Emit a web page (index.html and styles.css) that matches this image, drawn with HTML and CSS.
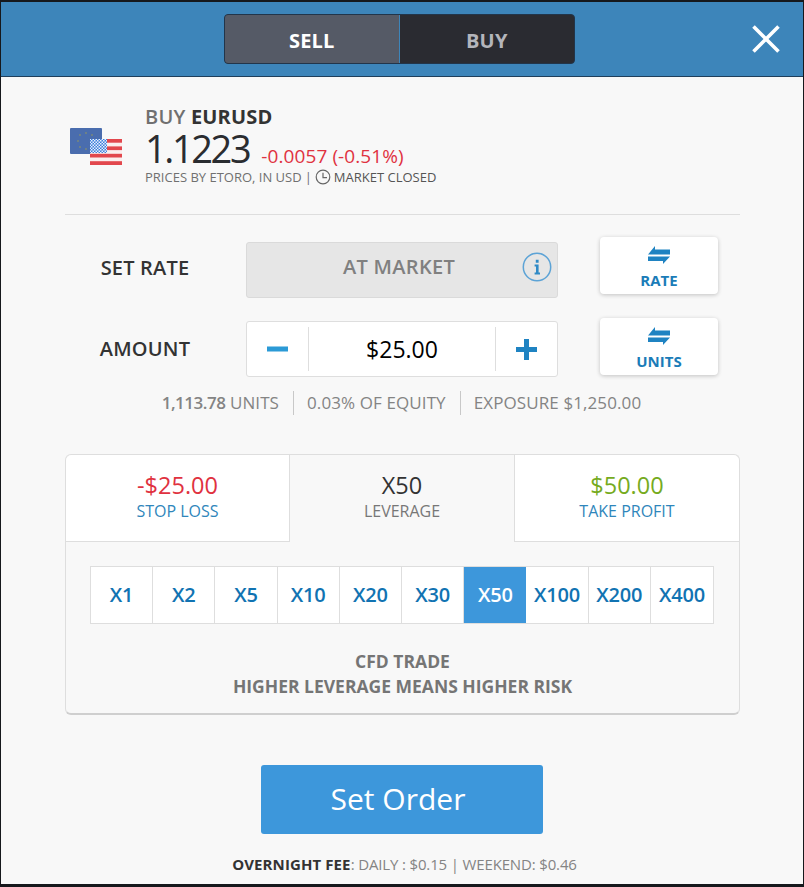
FILE: index.html
```html
<!DOCTYPE html>
<html lang="en">
<head>
    <meta charset="UTF-8">
    <meta name="viewport" content="width=device-width, initial-scale=1.0">
    <title>Set Order</title>
    <link rel="stylesheet" href="styles.css">
</head>
<body>
    <div class="modal">
        <header class="modal-head">
            <div class="side-toggle">
                <div class="side side-active">SELL</div>
                <div class="side">BUY</div>
            </div>
            <button class="close-btn" aria-label="Close">
                <svg width="28" height="28" viewBox="0 0 28 28"><path d="M1.5 1.5 L26.5 26.5 M26.5 1.5 L1.5 26.5" stroke="#fff" stroke-width="3.6" fill="none"/></svg>
            </button>
        </header>

        <section class="instrument">
            <svg class="flags" width="52" height="37" viewBox="0 0 52 37">
                <defs>
                    <pattern id="canton" width="3" height="3" patternUnits="userSpaceOnUse">
                        <rect width="3" height="3" fill="#3f7fdc"/>
                        <rect width="1.5" height="1.5" fill="#e8f0fc"/>
                        <rect x="1.5" y="1.5" width="1.5" height="1.5" fill="#e8f0fc"/>
                    </pattern>
                </defs>
                <rect x="0" y="0" width="32" height="26" rx="1" fill="#4a6dae"/>
                <g fill="#76867f">
                    <circle cx="16" cy="5" r="1.1"/><circle cx="22" cy="7" r="1.1"/><circle cx="10" cy="7" r="1.1"/>
                    <circle cx="8" cy="13" r="1.1"/><circle cx="10" cy="19" r="1.1"/><circle cx="16" cy="21" r="1.1"/>
                </g>
                <rect x="20" y="11" width="32" height="26" rx="1" fill="#fbeeee"/>
                <g fill="#e2474d">
                    <rect x="20" y="11" width="32" height="3.7"/>
                    <rect x="20" y="18.4" width="32" height="3.7"/>
                    <rect x="20" y="25.8" width="32" height="3.7"/>
                    <rect x="20" y="33.2" width="32" height="3.8"/>
                </g>
                <rect x="20" y="11" width="17" height="14" fill="url(#canton)"/>
            </svg>
            <div class="instrument-info">
                <div class="instrument-name"><span class="action">BUY</span> EURUSD</div>
                <div class="instrument-rate">
                    <span class="price">1.1223</span>
                    <span class="change">-0.0057 (-0.51%)</span>
                </div>
                <div class="instrument-note">
                    PRICES BY ETORO, IN USD
                    <span class="pipe">|</span>
                    <svg class="clock" width="16" height="16" viewBox="0 0 16 16"><circle cx="8" cy="8" r="6.8" fill="none" stroke="#666" stroke-width="1.2"/><path d="M8 3.8 V8.6 H12" fill="none" stroke="#666" stroke-width="1.2"/></svg>
                    <span class="closed">MARKET CLOSED</span>
                </div>
            </div>
        </section>

        <section class="inputs">
            <div class="input-row">
                <div class="input-label">SET RATE</div>
                <div class="rate-box">
                    <span>AT MARKET</span>
                    <svg class="info-icon" width="30" height="30" viewBox="0 0 30 30"><circle cx="15" cy="15" r="13.7" fill="none" stroke="#5ca3d6" stroke-width="1.5"/><path d="M12.6 12.6 H16.6 V20.6 H18 V22.4 H12.6 V20.6 H14 V14.4 H12.6 Z M13.8 7.8 H16.6 V10.8 H13.8 Z" fill="#2f8ac6"/></svg>
                </div>
                <button class="swap-btn">
                    <svg width="22" height="18" viewBox="0 0 22 18"><path d="M0 8.5 L7 0 V3.5 H22 V8.5 Z M0 10.5 H22 L15 18 V15 H0 Z" fill="#1f83c2"/></svg>
                    <span>RATE</span>
                </button>
            </div>
            <div class="input-row input-row-amount">
                <div class="input-label">AMOUNT</div>
                <div class="amount-box">
                    <div class="step"><svg width="21" height="6" viewBox="0 0 21 6"><rect width="21" height="5" y="0.5" fill="#2b9ad6"/></svg></div>
                    <div class="amount">$25.00</div>
                    <div class="step"><svg width="21" height="21" viewBox="0 0 21 21"><path d="M8 0 H13 V8 H21 V13 H13 V21 H8 V13 H0 V8 H8 Z" fill="#1f83c2"/></svg></div>
                </div>
                <button class="swap-btn">
                    <svg width="22" height="18" viewBox="0 0 22 18"><path d="M0 8.5 L7 0 V3.5 H22 V8.5 Z M0 10.5 H22 L15 18 V15 H0 Z" fill="#1f83c2"/></svg>
                    <span>UNITS</span>
                </button>
            </div>
            <div class="stats">
                <span class="stat"><b>1,113.78</b> UNITS</span>
                <span class="stat">0.03% OF EQUITY</span>
                <span class="stat">EXPOSURE $1,250.00</span>
            </div>
        </section>

        <section class="panel">
            <div class="tabs">
                <div class="tab">
                    <div class="tab-value red">-$25.00</div>
                    <div class="tab-label">STOP LOSS</div>
                </div>
                <div class="tab tab-active">
                    <div class="tab-value">X50</div>
                    <div class="tab-label">LEVERAGE</div>
                </div>
                <div class="tab">
                    <div class="tab-value green">$50.00</div>
                    <div class="tab-label">TAKE PROFIT</div>
                </div>
            </div>
            <div class="leverage">
                <div class="lev">X1</div>
                <div class="lev">X2</div>
                <div class="lev">X5</div>
                <div class="lev">X10</div>
                <div class="lev">X20</div>
                <div class="lev">X30</div>
                <div class="lev lev-active">X50</div>
                <div class="lev">X100</div>
                <div class="lev">X200</div>
                <div class="lev">X400</div>
            </div>
            <div class="risk">CFD TRADE<br>HIGHER LEVERAGE MEANS HIGHER RISK</div>
        </section>

        <button class="order-btn">Set Order</button>
        <div class="fee"><b>OVERNIGHT FEE</b>: DAILY : $0.15 | WEEKEND: $0.46</div>
    </div>
</body>
</html>
```

FILE: styles.css
```css
* {
    box-sizing: border-box;
}

html, body {
    height: 100%;
}

body {
    margin: 0;
    padding: 2px 1px 3px;
    background-color: #16181c;
    font-family: 'Open Sans', sans-serif;
    overflow: hidden;
}

button {
    font-family: inherit;
    cursor: pointer;
}

.modal {
    height: 882px;
    background-color: #f8f8f8;
}

/* header */
.modal-head {
    height: 75px;
    padding: 12px 0 0 223px;
    background-color: #3d85ba;
    border-bottom: 1px solid #1f3f5c;
    display: flex;
    align-items: flex-start;
}

.side-toggle {
    width: 351px;
    height: 50px;
    display: flex;
    border: 1px solid #22354a;
    border-radius: 4px;
    overflow: hidden;
    background-color: #2a2b31;
}

.side {
    width: 50%;
    padding-top: 3px;
    display: flex;
    align-items: center;
    justify-content: center;
    font-size: 20px;
    font-weight: 700;
    letter-spacing: 0.2px;
    color: #b4b5bb;
}

.side-active {
    background-color: #555a66;
    color: #fff;
    border-right: 1px solid #3d85ba;
}

.close-btn {
    margin: 11px 0 0 177px;
    padding: 0;
    width: 28px;
    height: 28px;
    background: none;
    border: none;
}

/* instrument */
.instrument {
    margin: 0 63px 0 64px;
    height: 138px;
    padding: 28px 0 0 5px;
    border-bottom: 1px solid #dedede;
    display: flex;
}

.flags {
    margin: 23px 23px 0 0;
    flex-shrink: 0;
}

.instrument-name {
    font-size: 20px;
    line-height: 24px;
    font-weight: 700;
    letter-spacing: 0.2px;
    color: #333;
}

.action {
    font-weight: 600;
    color: #707070;
}

.instrument-rate {
    margin-top: -1px;
    display: flex;
    align-items: baseline;
    gap: 12px;
    height: 40px;
}

.price {
    font-size: 38px;
    line-height: 40px;
    color: #2a2c30;
    letter-spacing: -2.4px;
}

.change {
    font-size: 19px;
    letter-spacing: 0.1px;
    color: #e0323f;
}

.instrument-note {
    font-size: 13px;
    line-height: 18px;
    color: #707070;
    display: flex;
    align-items: center;
    gap: 3px;
}

.closed {
    color: #555;
}

/* rate + amount */
.inputs {
    padding-top: 22px;
}

.input-row {
    height: 60px;
    display: flex;
    align-items: flex-start;
}

.input-row-amount {
    margin-top: 21px;
}

.input-label {
    width: 245px;
    padding: 6px 11px 0 54px;
    text-align: center;
    font-size: 20px;
    line-height: 50px;
    font-weight: 600;
    letter-spacing: 0.2px;
    color: #333;
}

.rate-box {
    margin-top: 5px;
    width: 312px;
    height: 56px;
    background-color: #e6e6e6;
    border: 1px solid #dadada;
    border-radius: 3px;
    display: flex;
    align-items: center;
    justify-content: space-between;
    padding: 0 5px 6px 96px;
    font-size: 20px;
    font-weight: 600;
    letter-spacing: 0.3px;
    color: #808080;
}

.rate-box span {
    margin-bottom: 2px;
}

.amount-box {
    margin-top: 3px;
    width: 312px;
    height: 56px;
    background-color: #fff;
    border: 1px solid #dedede;
    border-radius: 3px;
    display: flex;
    align-items: center;
}

.step {
    width: 62px;
    height: 44px;
    display: flex;
    align-items: center;
    justify-content: center;
}

.step:first-child {
    border-right: 1px solid #dedede;
}

.step:last-child {
    border-left: 1px solid #dedede;
}

.amount {
    flex: 1;
    text-align: center;
    font-size: 23px;
    color: #000;
}

.swap-btn {
    margin-left: 42px;
    width: 118px;
    height: 57px;
    padding: 9px 0 0;
    background-color: #fff;
    border: none;
    border-radius: 4px;
    box-shadow: 0 1px 4px rgba(0, 0, 0, 0.22);
    display: flex;
    flex-direction: column;
    align-items: center;
    font-size: 15px;
    line-height: 20px;
    font-weight: 700;
    color: #1b7cb8;
}

.swap-btn span {
    margin-top: 6px;
}

.stats {
    margin-top: 13px;
    display: flex;
    justify-content: center;
    font-size: 17px;
    line-height: 24px;
    letter-spacing: 0.1px;
    color: #848484;
}

.stats b {
    font-weight: 600;
    letter-spacing: -0.5px;
}

.stat {
    padding: 0 14px 0 13px;
    border-left: 1px solid #c8c8c8;
}

.stat:first-child {
    border-left: none;
}

/* tabs panel */
.panel {
    margin: 39px 63px 0 64px;
    height: 261px;
    background-color: #f8f8f8;
    border: 1px solid #dedede;
    border-bottom: 2px solid #cfcfcf;
    border-radius: 6px;
}

.tabs {
    height: 87px;
    display: grid;
    grid-template-columns: 223px 226px 1fr;
}

.tab {
    padding-top: 14px;
    text-align: center;
    background-color: #fff;
    border-bottom: 1px solid #dedede;
}

.tab:first-child {
    border-top-left-radius: 6px;
}

.tab:last-child {
    border-top-right-radius: 6px;
}

.tab-active {
    background-color: #f8f8f8;
    border-left: 1px solid #dedede;
    border-right: 1px solid #dedede;
    border-bottom: none;
}

.tab-value {
    font-size: 23.5px;
    line-height: 32px;
    color: #333;
}

.red {
    color: #e0323f;
}

.green {
    color: #76ab1e;
}

.tab-label {
    font-size: 16px;
    line-height: 20px;
    color: #2f86bb;
}

.tab-active .tab-label {
    color: #777;
}

.leverage {
    margin: 24px 25px 0 24px;
    height: 58px;
    display: grid;
    grid-template-columns: repeat(10, 1fr);
    background-color: #fff;
    border: 1px solid #dedede;
}

.lev {
    padding-bottom: 1px;
    display: flex;
    align-items: center;
    justify-content: center;
    border-right: 1px solid #dedede;
    font-size: 20px;
    font-weight: 600;
    color: #1173b2;
    letter-spacing: -0.2px;
}

.lev:last-child {
    border-right: none;
}

.lev-active {
    background-color: #3d97db;
    color: #fff;
    border-right: none;
}

.risk {
    margin-top: 25px;
    text-align: center;
    font-size: 17.5px;
    line-height: 25px;
    font-weight: 700;
    color: #757575;
}

/* footer */
.order-btn {
    display: block;
    margin: 50px 0 0 260px;
    width: 282px;
    height: 69px;
    padding: 0 8px 2px 0;
    background-color: #3d97db;
    border: none;
    border-radius: 3px;
    font-size: 30px;
    color: #fff;
}

.fee {
    margin-top: 20px;
    padding-left: 5px;
    text-align: center;
    font-size: 15px;
    line-height: 20px;
    letter-spacing: -0.15px;
    color: #848484;
}

.fee b {
    color: #333;
    letter-spacing: 0.1px;
}
```
